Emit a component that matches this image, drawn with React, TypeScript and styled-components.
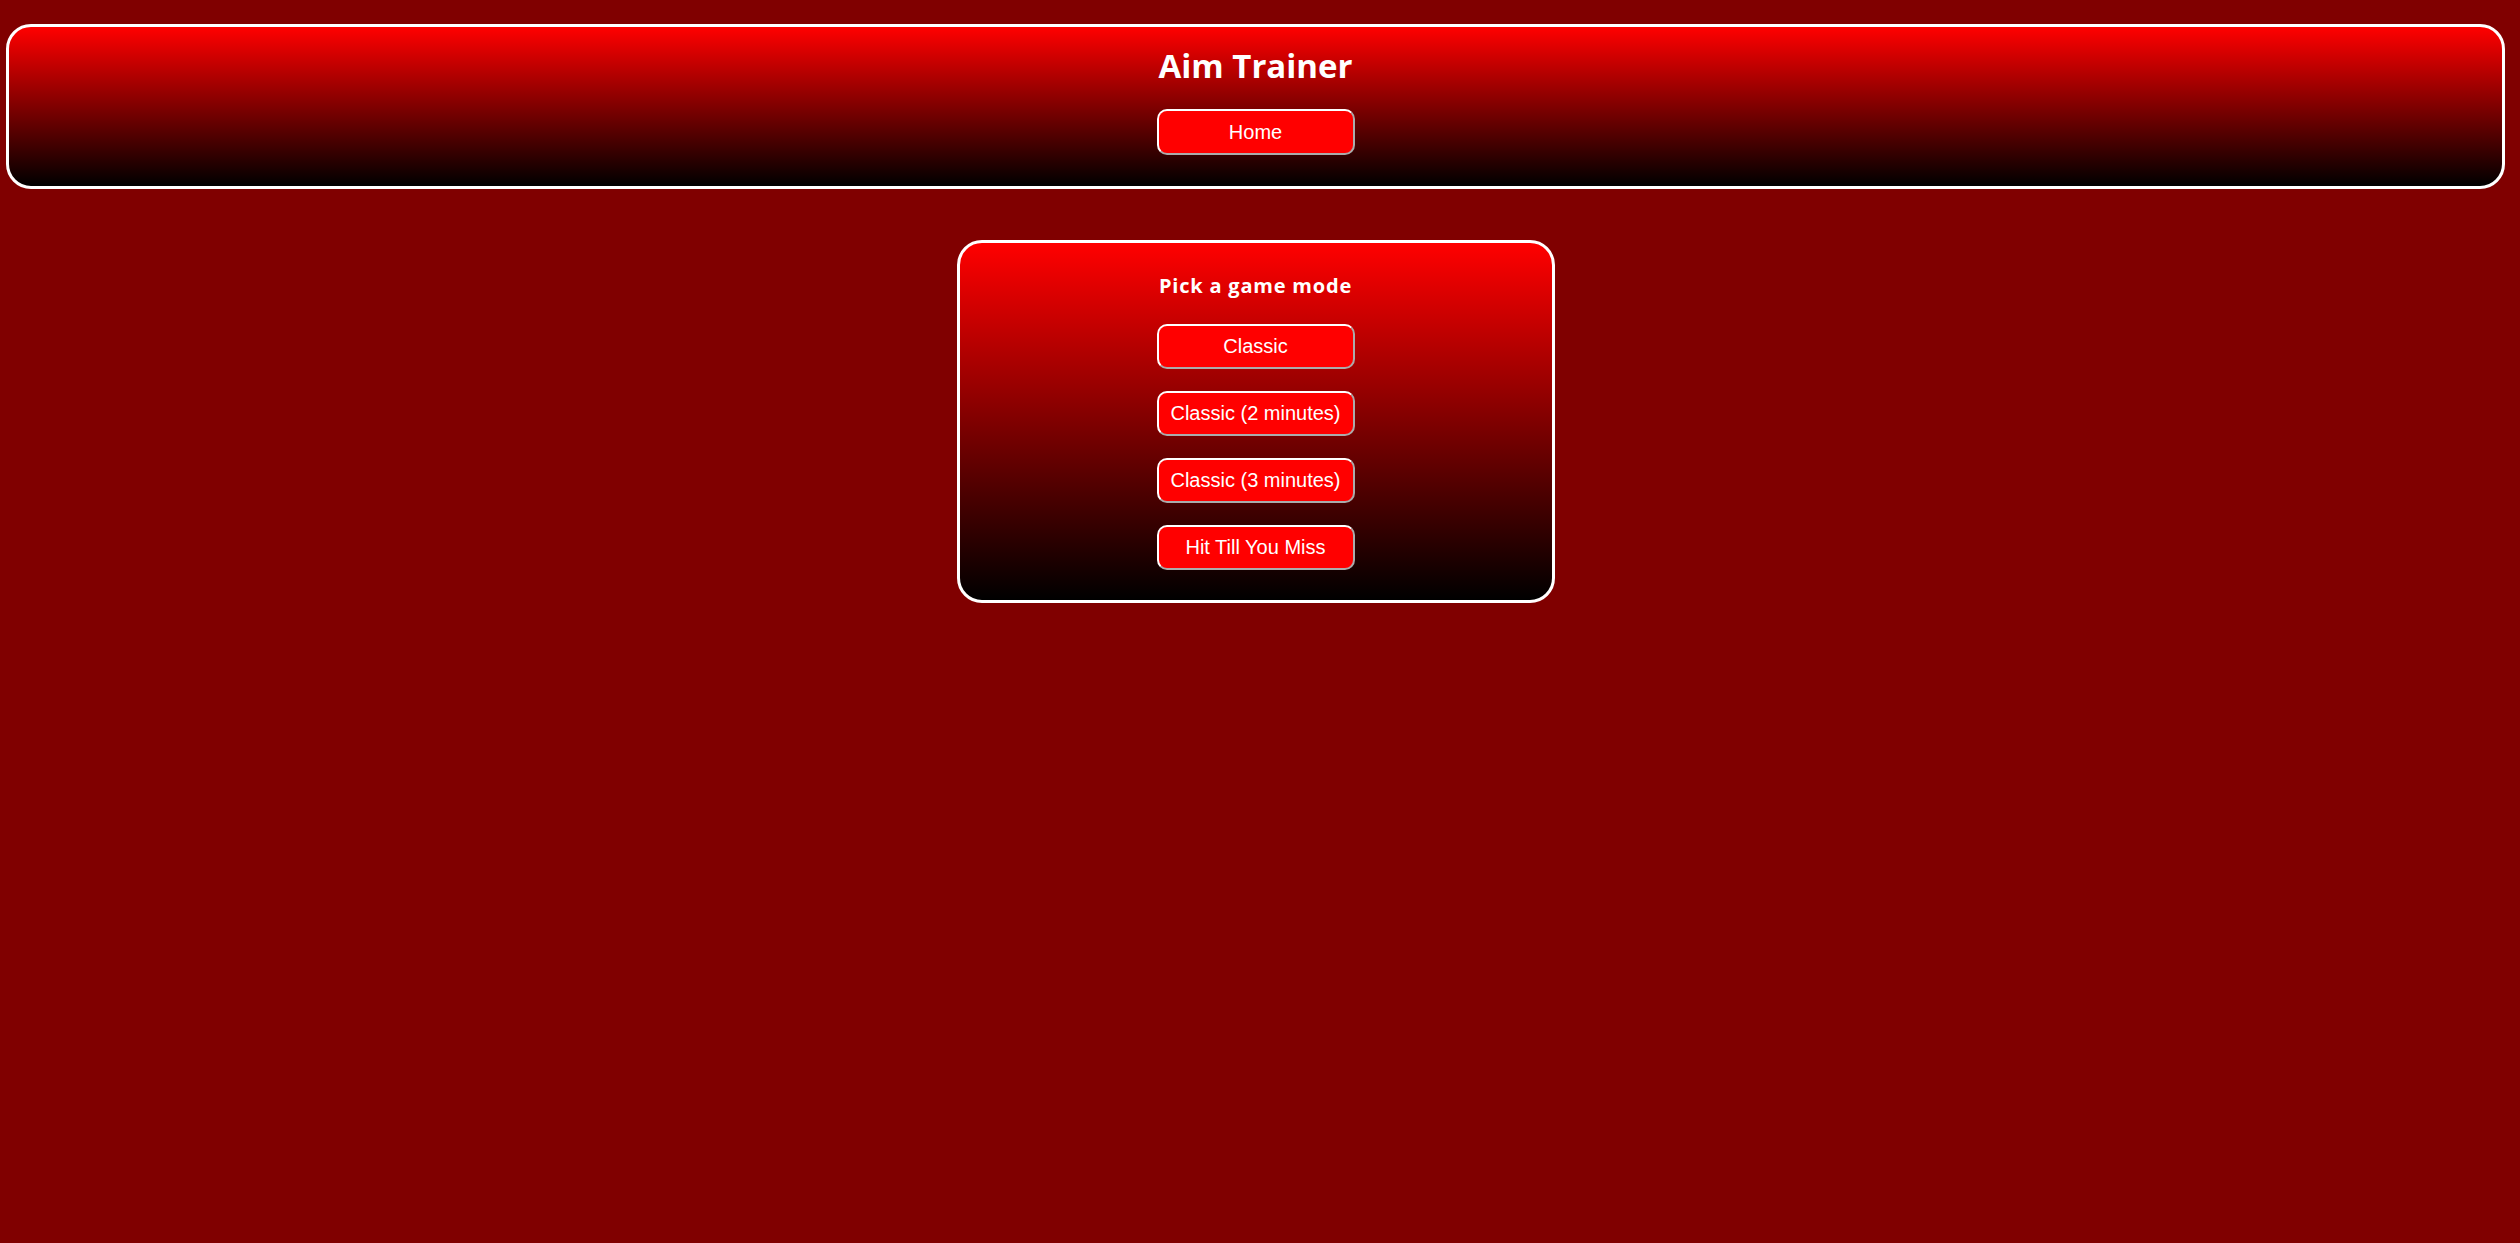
import React from "react";
import styled, { createGlobalStyle } from "styled-components";

const GlobalStyle = createGlobalStyle`
  html, body {
    margin: 0;
    padding: 0;
    background: #800000;
    min-height: 100%;
  }
  body {
    min-height: 1243px;
    font-family: "Liberation Sans", Arial, sans-serif;
  }
`;

const Page = styled.div`
  display: flex;
  flex-direction: column;
  align-items: stretch;
  gap: 51px;
  padding: 24px 15px 0 6px;
`;

const Panel = styled.div`
  display: flex;
  flex-direction: column;
  align-items: center;
  border: 3px solid #ffffff;
  border-radius: 25px;
  background: linear-gradient(to bottom, #ff0000, #000000);
  box-sizing: border-box;
`;

const Header = styled(Panel)`
  padding: 19px 0 31px;
`;

const ModeCard = styled(Panel)`
  align-self: center;
  width: 598px;
  padding: 31px 0 30px;
`;

const Title = styled.h1`
  margin: 0;
  font-family: "Open Sans", "Liberation Sans", sans-serif;
  font-weight: 700;
  font-size: 33px;
  line-height: 40px;
  color: #ffffff;
  letter-spacing: 0;
`;

const Subtitle = styled.h3`
  margin: 0;
  font-family: "Open Sans", "Liberation Sans", sans-serif;
  font-weight: 700;
  font-size: 20px;
  line-height: 24px;
  color: #ffffff;
  letter-spacing: 0.8px;
`;

const ButtonList = styled.div<{ $top: number }>`
  display: flex;
  flex-direction: column;
  gap: 22px;
  margin-top: ${(p) => p.$top}px;
`;

const RedButton = styled.button<{ $h: number }>`
  box-sizing: border-box;
  width: 198px;
  height: ${(p) => p.$h}px;
  padding: 0;
  border: 2px outset #ffffff;
  border-radius: 10px;
  background: #ff0000;
  color: #ffffff;
  font-family: "Liberation Sans", Arial, sans-serif;
  font-size: 20px;
  cursor: pointer;
`;

const modes = [
  "Classic",
  "Classic (2 minutes)",
  "Classic (3 minutes)",
  "Hit Till You Miss",
];

export default function App() {
  return (
    <>
      <GlobalStyle />
      <Page>
        <Header>
          <Title>Aim Trainer</Title>
          <ButtonList $top={23}>
            <RedButton $h={46}>Home</RedButton>
          </ButtonList>
        </Header>
        <ModeCard>
          <Subtitle>Pick a game mode</Subtitle>
          <ButtonList $top={26}>
            {modes.map((m) => (
              <RedButton key={m} $h={45}>
                {m}
              </RedButton>
            ))}
          </ButtonList>
        </ModeCard>
      </Page>
    </>
  );
}
